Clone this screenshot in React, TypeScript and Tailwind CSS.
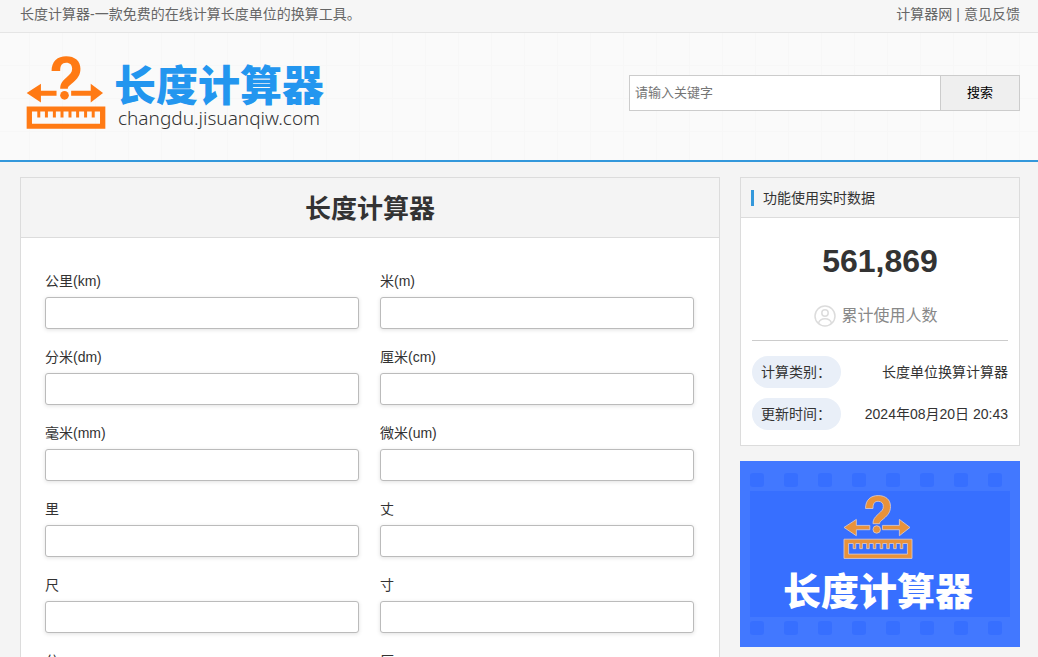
const fields = [
  "公里(km)",
  "米(m)",
  "分米(dm)",
  "厘米(cm)",
  "毫米(mm)",
  "微米(um)",
  "里",
  "丈",
  "尺",
  "寸",
  "分",
  "厘",
];

const holes = [0, 1, 2, 3, 4, 5, 6, 7];

type RulerMarkProps = {
  className: string;
};

function RulerMark({ className }: RulerMarkProps) {
  return (
    <svg viewBox="-2 -2 241 223" className={className} aria-hidden="true">
      <path d="M75 45C75 15 93 0 119 0C145 0 162 14 162 38C162 57 153 68 139 80C128 89 124 92 124 98H101C101 83 107 76 119 65C131 54 137 49 137 38C137 27 131 20 119 20C106 20 101 28 101 45Z" />
      <circle cx="114" cy="118" r="13" />
      <path d="M0 111L43 83V104H90V119H43V140Z" />
      <path d="M230 111L193 83V104H134V119H193V140Z" />
      <path
        fillRule="evenodd"
        d="M0 152H237V219H0ZM16 167V204H221V167H205V185H196V167H182V185H173V167H158V185H149V167H135V185H126V167H111V185H102V167H88V185H79V167H64V185H55V167H41V185H32V167Z"
      />
    </svg>
  );
}

function UserIcon() {
  return (
    <svg
      viewBox="0 0 22 22"
      className="size-[22px] fill-none stroke-[#dcdcdc] stroke-[1.5]"
      aria-hidden="true"
    >
      <circle cx="11" cy="11" r="10" />
      <circle cx="11" cy="8" r="3.2" />
      <path d="M4.5 18C5.5 15 8 13.8 11 13.8S16.5 15 17.5 18" />
    </svg>
  );
}

function Header() {
  return (
    <header>
      <div className="flex h-[33px] items-center justify-between border-b border-[#e5e5e5] bg-[#f6f6f6] pr-[18px] pb-1 pl-5 text-sm text-[#666]">
        <p>长度计算器-一款免费的在线计算长度单位的换算工具。</p>
        <nav className="flex gap-1">
          <a href="#home">计算器网</a>
          <span>|</span>
          <a href="#feedback">意见反馈</a>
        </nav>
      </div>
      <div className="flex h-[129px] items-center justify-between border-b-2 border-[#3498db] bg-[#fafafa] bg-[linear-gradient(#f7f7f7_1px,transparent_1px),linear-gradient(90deg,#f7f7f7_1px,transparent_1px)] bg-size-[33px_33px] bg-position-[29px_32px] pr-[18px] pb-2 pl-5">
        <a href="#home" className="flex items-center gap-2 pl-1.5">
          <RulerMark className="h-[75px] w-20 fill-[#ff7a14]" />
          <span className="flex flex-col pt-1">
            <span className="text-[42px] leading-[46px] font-black text-[#2396ef]">
              长度计算器
            </span>
            <span className="pl-1 font-['Noto_Sans'] text-[19px] leading-4 font-light text-[#333]">
              changdu.jisuanqiw.com
            </span>
          </span>
        </a>
        <form
          className="flex h-9 w-[391px]"
          onSubmit={(e) => e.preventDefault()}
        >
          <input
            type="search"
            aria-label="请输入关键字"
            placeholder="请输入关键字"
            className="min-w-0 flex-1 border border-r-0 border-[#ccc] bg-white px-[5px] text-[13px] placeholder:text-[#757575]"
          />
          <button className="w-20 border border-[#ccc] bg-[#efefef] text-[13px] text-black">
            搜索
          </button>
        </form>
      </div>
    </header>
  );
}

function Converter() {
  return (
    <section className="min-w-0 flex-1 border border-[#dcdcdc] bg-white">
      <h1 className="flex h-[60px] items-center justify-center border-b border-[#dcdcdc] bg-[#f4f4f4] pt-1 text-[26px] font-bold">
        长度计算器
      </h1>
      <div className="grid grid-cols-2 gap-x-[21px] gap-y-[18px] py-[33px] pr-[25px] pl-6">
        {fields.map((name) => (
          <label key={name} className="flex flex-col gap-1.5 text-sm">
            {name}
            <input
              type="text"
              className="h-8 w-full rounded-[3px] border border-[#bbb] bg-white px-2 shadow-[0_1px_4px_rgba(0,0,0,0.12)]"
            />
          </label>
        ))}
      </div>
    </section>
  );
}

function Stats() {
  return (
    <section className="border border-[#dcdcdc] bg-white">
      <h2 className="flex h-10 items-center gap-[9px] border-b border-[#dcdcdc] bg-[#f4f4f4] px-2.5 text-sm">
        <span className="h-4 w-[3px] bg-[#3498db]" />
        功能使用实时数据
      </h2>
      <div className="px-[11px] pb-[15px]">
        <p className="pt-6 text-center text-[32px] leading-[38px] font-bold">
          561,869
        </p>
        <p className="mt-6 flex items-center justify-center gap-[5px] border-b border-[#ccc] pr-2 pb-3 text-base text-[#888]">
          <UserIcon />
          累计使用人数
        </p>
        <dl className="flex flex-col gap-2.5 pt-[15px] text-sm">
          <div className="flex items-center justify-between">
            <dt className="rounded-2xl bg-[#e9eff8] pr-2.5 pl-[9px] leading-8">
              计算类别：
            </dt>
            <dd>长度单位换算计算器</dd>
          </div>
          <div className="flex items-center justify-between">
            <dt className="rounded-2xl bg-[#e9eff8] pr-2.5 pl-[9px] leading-8">
              更新时间：
            </dt>
            <dd>2024年08月20日 20:43</dd>
          </div>
        </dl>
      </div>
    </section>
  );
}

function Holes() {
  return (
    <div className="flex justify-between pr-2">
      {holes.map((n) => (
        <span key={n} className="size-3.5 rounded-[3px] bg-[#376fff]" />
      ))}
    </div>
  );
}

function Banner() {
  return (
    <a
      href="#length"
      className="flex h-[186px] flex-col justify-between bg-[#4278ff] px-2.5 py-3"
    >
      <Holes />
      <div className="flex h-[126px] flex-col items-center bg-[#376fff] pt-1 pr-1">
        <RulerMark className="h-[65px] w-[70px] fill-[#e8923a] stroke-[#d8c8cc] stroke-3" />
        <span className="pt-2 text-[38px] leading-[50px] font-black text-white">
          长度计算器
        </span>
      </div>
      <Holes />
    </a>
  );
}

export default function App() {
  return (
    <div className="min-h-screen bg-[#f4f4f4] font-['Liberation_Sans','Noto_Sans_CJK_SC',sans-serif] text-[#333]">
      <Header />
      <main className="flex items-start gap-5 pt-[15px] pr-[18px] pb-5 pl-5">
        <Converter />
        <aside className="flex w-[280px] shrink-0 flex-col gap-[15px]">
          <Stats />
          <Banner />
        </aside>
      </main>
    </div>
  );
}
